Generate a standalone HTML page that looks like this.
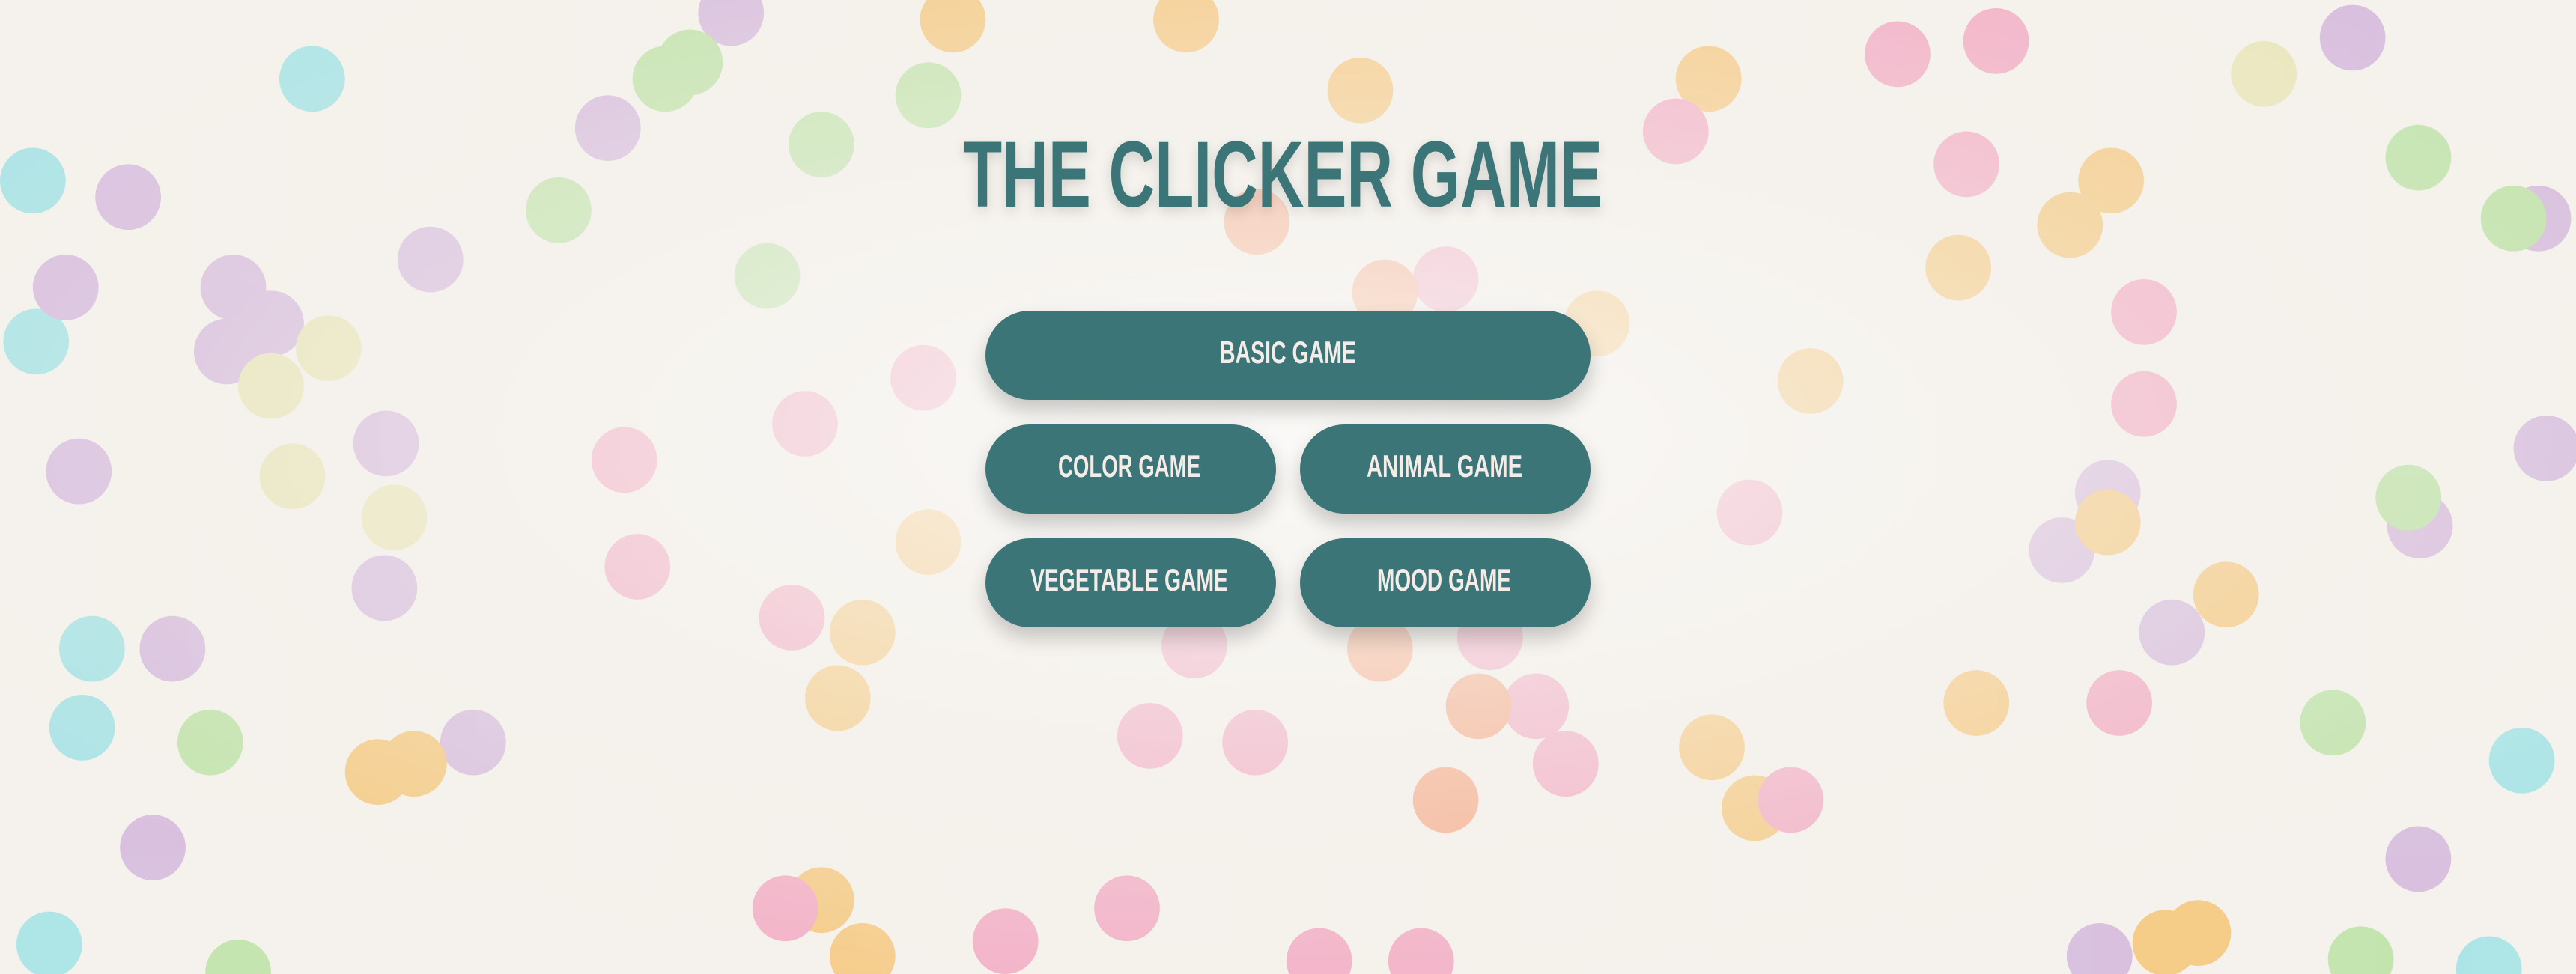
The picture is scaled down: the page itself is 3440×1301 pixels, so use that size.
<!DOCTYPE html>
<html><head><meta charset="utf-8"><style>
html,body{margin:0;padding:0;width:3440px;height:1301px;overflow:hidden;background:#f6f3ee;}
svg{position:absolute;left:0;top:0;}
.b{position:absolute;background:#3b7578;border-radius:60px;box-shadow:0 14px 26px rgba(0,0,0,.2);}
.t{font-family:"Liberation Sans",sans-serif;font-weight:bold;}
</style></head><body>
<svg width="3440" height="1301" viewBox="0 0 1568 593" preserveAspectRatio="none">
<defs><radialGradient id="g" cx="50%" cy="45%" r="60%"><stop offset="0" stop-color="#fbfaf8" stop-opacity=".9"/><stop offset="1" stop-color="#f1ede6" stop-opacity="0"/></radialGradient></defs>
<rect width="1568" height="593" fill="#f5f2ed"/>
<g opacity=".9">
<g fill="#a6e3e6"><circle cx="190" cy="48" r="20"/><circle cx="20" cy="110" r="20"/><circle cx="22" cy="208" r="20"/><circle cx="56" cy="395" r="20"/><circle cx="50" cy="443" r="20"/><circle cx="1535" cy="463" r="20"/><circle cx="30" cy="575" r="20"/><circle cx="1515" cy="590" r="20"/></g>
<g fill="#d6bbde"><circle cx="78" cy="120" r="20"/><circle cx="40" cy="175" r="20"/><circle cx="142" cy="175" r="20"/><circle cx="165" cy="197" r="20"/><circle cx="138" cy="214" r="20"/><circle cx="262" cy="158" r="20"/><circle cx="370" cy="78" r="20"/><circle cx="445" cy="8" r="20"/><circle cx="48" cy="287" r="20"/><circle cx="235" cy="270" r="20"/><circle cx="234" cy="358" r="20"/><circle cx="105" cy="395" r="20"/><circle cx="288" cy="452" r="20"/><circle cx="93" cy="516" r="20"/><circle cx="1432" cy="23" r="20"/><circle cx="1545" cy="133" r="20"/><circle cx="1255" cy="335" r="20"/><circle cx="1283" cy="300" r="20"/><circle cx="1473" cy="320" r="20"/><circle cx="1550" cy="273" r="20"/><circle cx="1322" cy="385" r="20"/><circle cx="1472" cy="523" r="20"/><circle cx="1278" cy="582" r="20"/></g>
<g fill="#bfe3a8"><circle cx="340" cy="128" r="20"/><circle cx="405" cy="48" r="20"/><circle cx="420" cy="38" r="20"/><circle cx="500" cy="88" r="20"/><circle cx="565" cy="58" r="20"/><circle cx="467" cy="168" r="20"/><circle cx="1472" cy="96" r="20"/><circle cx="1530" cy="133" r="20"/><circle cx="1466" cy="303" r="20"/><circle cx="128" cy="452" r="20"/><circle cx="1420" cy="440" r="20"/><circle cx="145" cy="592" r="20"/><circle cx="1437" cy="584" r="20"/></g>
<g fill="#e9e6b8"><circle cx="200" cy="212" r="20"/><circle cx="165" cy="235" r="20"/><circle cx="178" cy="290" r="20"/><circle cx="240" cy="315" r="20"/><circle cx="1378" cy="45" r="20"/></g>
<g fill="#f6c87e"><circle cx="580" cy="12" r="20"/><circle cx="722" cy="12" r="20"/><circle cx="828" cy="55" r="20"/><circle cx="1040" cy="48" r="20"/><circle cx="1285" cy="110" r="20"/><circle cx="1260" cy="137" r="20"/><circle cx="1192" cy="163" r="20"/><circle cx="972" cy="197" r="20"/><circle cx="1102" cy="232" r="20"/><circle cx="1283" cy="318" r="20"/><circle cx="1355" cy="362" r="20"/><circle cx="525" cy="385" r="20"/><circle cx="510" cy="425" r="20"/><circle cx="230" cy="470" r="20"/><circle cx="252" cy="465" r="20"/><circle cx="1042" cy="455" r="20"/><circle cx="1068" cy="492" r="20"/><circle cx="1203" cy="428" r="20"/><circle cx="500" cy="548" r="20"/><circle cx="525" cy="582" r="20"/><circle cx="1318" cy="574" r="20"/><circle cx="1338" cy="568" r="20"/><circle cx="565" cy="330" r="20"/></g>
<g fill="#f3aac3"><circle cx="1020" cy="80" r="20"/><circle cx="1155" cy="33" r="20"/><circle cx="1215" cy="25" r="20"/><circle cx="1197" cy="100" r="20"/><circle cx="880" cy="170" r="20"/><circle cx="1305" cy="190" r="20"/><circle cx="1305" cy="246" r="20"/><circle cx="1065" cy="312" r="20"/><circle cx="380" cy="280" r="20"/><circle cx="388" cy="345" r="20"/><circle cx="490" cy="258" r="20"/><circle cx="562" cy="230" r="20"/><circle cx="482" cy="376" r="20"/><circle cx="700" cy="448" r="20"/><circle cx="764" cy="452" r="20"/><circle cx="727" cy="393" r="20"/><circle cx="907" cy="388" r="20"/><circle cx="935" cy="430" r="20"/><circle cx="953" cy="465" r="20"/><circle cx="1090" cy="487" r="20"/><circle cx="1290" cy="428" r="20"/><circle cx="478" cy="553" r="20"/><circle cx="612" cy="573" r="20"/><circle cx="686" cy="553" r="20"/><circle cx="803" cy="585" r="20"/><circle cx="865" cy="585" r="20"/></g>
<g fill="#f7a885"><circle cx="765" cy="135" r="20"/><circle cx="843" cy="178" r="20"/><circle cx="840" cy="395" r="20"/><circle cx="900" cy="430" r="20"/><circle cx="880" cy="487" r="20"/></g>
</g>
<rect width="1568" height="593" fill="url(#g)"/>
</svg>
<div class="b" style="left:1316px;top:415px;width:808px;height:119px;"></div>
<div class="b" style="left:1316px;top:567px;width:388px;height:119px;"></div>
<div class="b" style="left:1736px;top:567px;width:388px;height:119px;"></div>
<div class="b" style="left:1316px;top:719px;width:388px;height:119px;"></div>
<div class="b" style="left:1736px;top:719px;width:388px;height:119px;"></div>
<svg width="3440" height="1301" viewBox="0 0 3440 1301">
<defs><filter id="s" x="-10%" y="-30%" width="120%" height="160%"><feDropShadow dx="0" dy="6" stdDeviation="8" flood-opacity=".15"/></filter></defs>
<text class="t" x="1286" y="276" font-size="125" fill="#3a7478" textLength="854" lengthAdjust="spacingAndGlyphs" filter="url(#s)">THE CLICKER GAME</text>
<g class="t" font-size="42" fill="#f4ece6">
<text x="1629" y="485" textLength="182" lengthAdjust="spacingAndGlyphs">BASIC GAME</text>
<text x="1413" y="637" textLength="190" lengthAdjust="spacingAndGlyphs">COLOR GAME</text>
<text x="1825" y="637" textLength="208" lengthAdjust="spacingAndGlyphs">ANIMAL GAME</text>
<text x="1376" y="789" textLength="264" lengthAdjust="spacingAndGlyphs">VEGETABLE GAME</text>
<text x="1839" y="789" textLength="179" lengthAdjust="spacingAndGlyphs">MOOD GAME</text>
</g>
</svg>
</body></html>
